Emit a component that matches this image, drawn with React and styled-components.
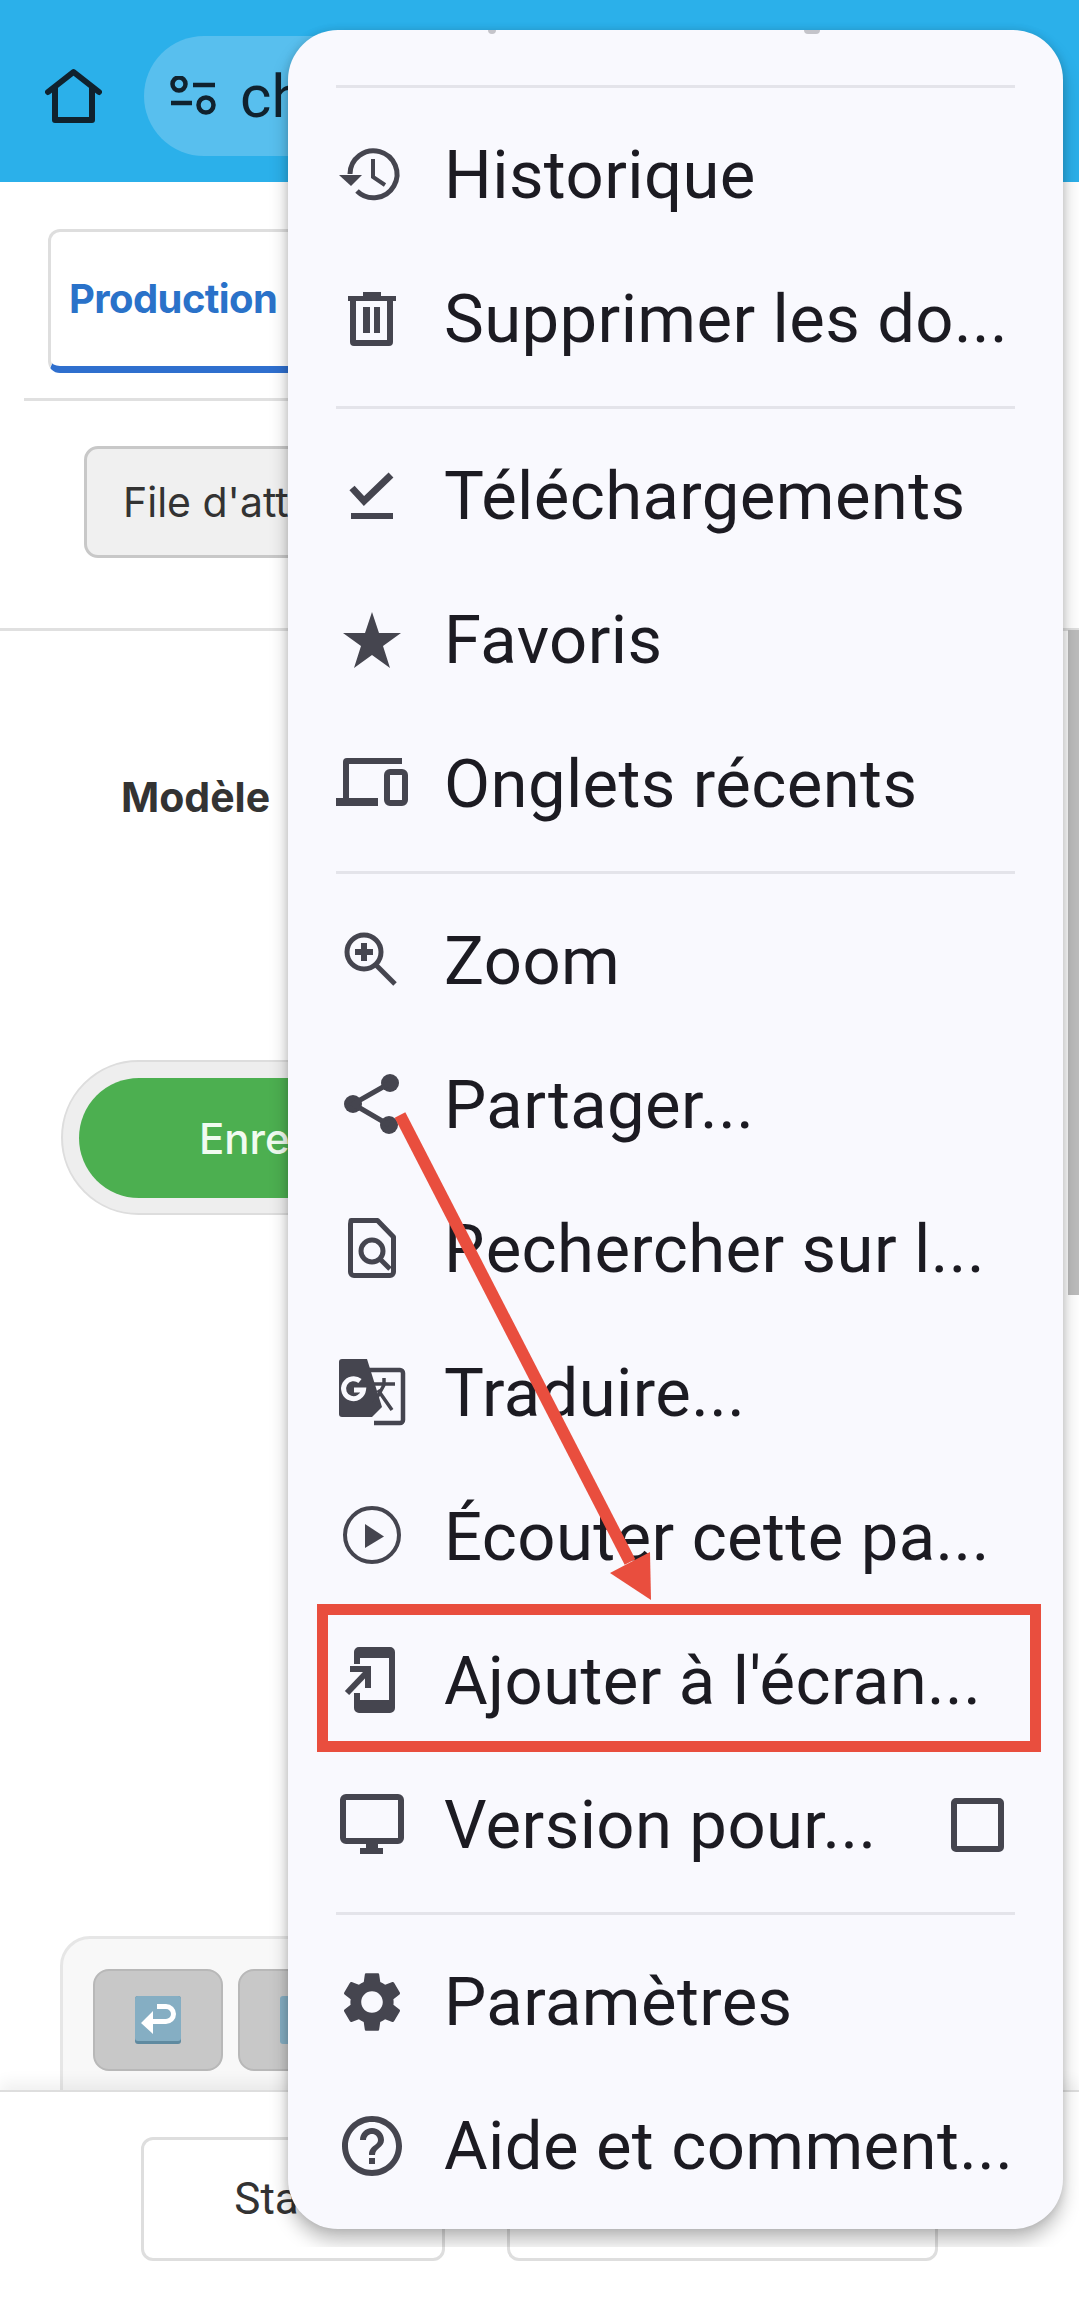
import styled, { createGlobalStyle } from "styled-components";

const GlobalStyle = createGlobalStyle`
  html, body {
    margin: 0;
    padding: 0;
    background: #ffffff;
  }
`;

const Page = styled.div`
  position: relative;
  width: 1079px;
  height: 2307px;
  overflow: hidden;
  background: #ffffff;
  font-family: "Inter", "Liberation Sans", sans-serif;
`;

const TopBar = styled.header`
  display: flex;
  align-items: center;
  gap: 42px;
  height: 182px;
  padding: 10px 0 0 45px;
  box-sizing: border-box;
  background: #2bb0ea;
`;

const UrlPill = styled.div`
  display: flex;
  align-items: center;
  gap: 24px;
  width: 800px;
  height: 120px;
  padding-left: 26px;
  box-sizing: border-box;
  border-radius: 60px;
  background: #58bfee;
  color: #10222e;
  font-size: 60px;
  font-family: "Roboto", sans-serif;
`;

const TabBar = styled.nav`
  display: flex;
  margin: 0 24px;
  padding: 47px 0 25px 24px;
  border-bottom: 3px solid #e0e0e0;
`;

const Tab = styled.div`
  width: 400px;
  height: 144px;
  padding: 42px 0 0 18px;
  box-sizing: border-box;
  border: 3px solid #dedede;
  border-bottom: 7px solid #2f6fce;
  border-radius: 12px;
  color: #2a72c9;
  font-size: 40px;
  font-weight: 700;
  letter-spacing: -0.6px;
`;

const QueueBar = styled.div`
  padding: 45px 0 70px 84px;
  border-bottom: 3px solid #e0e0e0;
`;

const QueueButton = styled.div`
  width: 500px;
  height: 112px;
  padding-left: 36px;
  box-sizing: border-box;
  display: flex;
  align-items: center;
  border: 3px solid #c8c8c8;
  border-radius: 14px;
  background: #f0f0f0;
  color: #333333;
  font-size: 41px;
`;

const FormRow = styled.div`
  padding: 141px 0 0 121px;
  height: 284px;
  box-sizing: border-box;
  color: #333333;
  font-size: 41px;
  font-weight: 700;
`;

const SaveTrack = styled.div`
  width: 900px;
  height: 155px;
  margin: 145px 0 0 61px;
  padding: 16px;
  box-sizing: border-box;
  border: 2px solid #dddddd;
  border-radius: 78px;
  background: #eeeeee;
`;

const SaveButton = styled.div`
  height: 120px;
  padding-left: 120px;
  display: flex;
  align-items: center;
  border-radius: 60px;
  background: #4caf50;
  color: #f0fbf0;
  font-size: 42px;
  font-weight: 500;
`;

const ActionsPanel = styled.section`
  display: grid;
  grid-template-columns: repeat(6, 130px);
  gap: 15px;
  width: 950px;
  height: 300px;
  margin: 721px 0 0 60px;
  padding: 30px;
  box-sizing: border-box;
  border: 3px solid #e6e6e6;
  border-radius: 30px;
  background: #f8f8f8;
`;

const ActionButton = styled.div`
  display: flex;
  align-items: center;
  justify-content: center;
  height: 102px;
  box-sizing: border-box;
  border: 2px solid #b8b8b8;
  border-radius: 16px;
  background: #c8c8c8;
`;

const Footer = styled.footer`
  position: absolute;
  left: 0;
  right: 0;
  bottom: 0;
  height: 217px;
  display: flex;
  gap: 62px;
  padding: 45px 0 0 141px;
  box-sizing: border-box;
  border-top: 2px solid #dedede;
  background: #ffffff;
  box-shadow: 0 -8px 14px rgba(0, 0, 0, 0.06);
`;

const FooterButton = styled.div`
  display: flex;
  align-items: center;
  justify-content: center;
  width: ${(p) => p.$width}px;
  height: 124px;
  box-sizing: border-box;
  border: 3px solid #dedede;
  border-radius: 12px;
  color: #333333;
  font-family: "Roboto", sans-serif;
  font-size: 44px;
`;

const ScrollThumb = styled.div`
  position: absolute;
  top: 630px;
  right: 0;
  width: 11px;
  height: 665px;
  background: #bcbcbc;
`;

const Menu = styled.div`
  position: absolute;
  top: 30px;
  left: 288px;
  width: 775px;
  height: 2199px;
  padding-top: 40px;
  box-sizing: border-box;
  border-radius: 50px;
  background: #f9f9fe;
  box-shadow: 0 12px 18px rgba(0, 0, 0, 0.25), 0 0 8px rgba(0, 0, 0, 0.12);
  clip-path: inset(-30px -30px -18px -30px);
`;

const Speck = styled.span`
  position: absolute;
  top: 0;
  left: ${(p) => p.$left}px;
  width: ${(p) => p.$width}px;
  height: 4px;
  border-radius: 0 0 6px 6px;
  background: #c4c4ca;
`;

const Divider = styled.div`
  height: 3px;
  margin: 15px 48px;
  background: #e4e4ea;
`;

const MenuRow = styled.div`
  display: flex;
  align-items: center;
  height: 144px;
  padding-left: 36px;
  color: #1c1b22;
  font-family: "Roboto", sans-serif;
  font-size: 67px;
  letter-spacing: 0.4px;
  white-space: nowrap;
`;

const IconSlot = styled.span`
  display: flex;
  flex: none;
  width: 96px;
  height: 96px;
  margin-right: 24px;
  color: #45454f;
`;

const CheckBox = styled.span`
  position: absolute;
  right: 59px;
  width: 53px;
  height: 54px;
  box-sizing: border-box;
  border: 6px solid #45454f;
  border-radius: 5px;
`;

const Annotation = styled.svg`
  position: absolute;
  top: 0;
  left: 0;
  pointer-events: none;
`;

// drawn on a 96px grid that matches the icon slot
const Icon = ({ children }) => (
  <svg width="96" height="96" viewBox="0 0 96 96" fill="currentColor" stroke="none">
    {children}
  </svg>
);

const Line = ({ d, w = 5 }) => <path d={d} fill="none" stroke="currentColor" strokeWidth={w} />;

const MaterialIcon = ({ d }) => (
  <svg width="96" height="96" viewBox="-4 -4 32 32" fill="currentColor">
    <path d={d} />
  </svg>
);

const icons = {
  history: (
    <Icon>
      <Line d="M26 47A23.500 23.500 0 1 1 33 64" />
      <path d="M15 48H38L27 59z" />
      <Line d="M49 32V50L61 58" w={4} />
    </Icon>
  ),
  trash: (
    <Icon>
      <path d="M24 25H39V21H57V25H72V30H24z" />
      <path fillRule="evenodd" d="M26 28H69V71a4 4 0 0 1-4 4H30a4 4 0 0 1-4-4zM32 30V69H63V30z" />
      <path d="M39 36H46V62H39zM50 36H56V62H50z" />
    </Icon>
  ),
  done: (
    <Icon>
      <Line d="M28 40 40 53 67 27" w={7} />
      <path d="M27 65H69V71H27z" />
    </Icon>
  ),
  star: (
    <Icon>
      <path d="M48 20 55 41H77L59 54 66 76 48 63 30 76 37 54 19 41H41z" />
    </Icon>
  ),
  devices: (
    <Icon>
      <path d="M23 22H78V28H25V62H54V70H12V62H19V26a4 4 0 0 1 4-4z" />
      <rect x="63" y="36" width="18" height="31" rx="3" fill="none" stroke="currentColor" strokeWidth="6" />
    </Icon>
  ),
  zoom: (
    <Icon>
      <circle cx="40" cy="39" r="17" fill="none" stroke="currentColor" strokeWidth="5" />
      <path d="M37 30H43V36H49V42H43V48H37V42H31V36H37z" />
      <Line d="M51 51 71 71" w={5} />
    </Icon>
  ),
  share: (
    <Icon>
      <circle cx="66" cy="26" r="9" />
      <circle cx="29" cy="47" r="9" />
      <circle cx="65" cy="68" r="9" />
      <Line d="M66 26 29 47 65 68" />
    </Icon>
  ),
  findInPage: (
    <Icon>
      <path d="M27 19.500H53.500L69.500 36V71a3.500 3.500 0 0 1-3.500 3.500H30a3.500 3.500 0 0 1-3.500-3.500V23z" fill="none" stroke="currentColor" strokeWidth="5" strokeLinejoin="round" />
      <circle cx="48" cy="50" r="11" fill="none" stroke="currentColor" strokeWidth="5" />
      <Line d="M56 58 66 68" />
    </Icon>
  ),
  translate: (
    <Icon>
      <path d="M18 14H43L58 62 48 72H18a3 3 0 0 1-3-3V17a3 3 0 0 1 3-3z" />
      <path d="M44 25H76a3 3 0 0 1 3 3V75a3 3 0 0 1-3 3H50" fill="none" stroke="currentColor" strokeWidth="4.500" />
      <path d="M36 36A10 10 0 1 0 39.500 45H30" fill="none" stroke="#f9f9fe" strokeWidth="5" />
      <Line d="M50 39H71M60 33V39M54 45 68 65M60 40 50 58" w={3.500} />
    </Icon>
  ),
  play: (
    <Icon>
      <circle cx="48" cy="46" r="27" fill="none" stroke="currentColor" strokeWidth="4" />
      <path d="M41 35 60 47.500 41 59z" />
    </Icon>
  ),
  addHome: (
    <Icon>
      <path d="M35 14H66a5 5 0 0 1 5 5V75a5 5 0 0 1-5 5H35a5 5 0 0 1-5-5V60H36V67H65V25H36V31H30V19a5 5 0 0 1 5-5z" />
      <Line d="M23 60 44 38" w={6} />
      <path d="M26 33H47V55H41V39H26z" />
    </Icon>
  ),
  desktop: (
    <Icon>
      <rect x="19" y="20" width="58" height="44" rx="3" fill="none" stroke="currentColor" strokeWidth="6" />
      <path d="M42 66H54V71H59V77H36V71H42z" />
    </Icon>
  ),
  settings: (
    <MaterialIcon d="M19.140 12.940c.04-.3.06-.61.06-.94 0-.32-.02-.64-.07-.94l2.030-1.580c.18-.14.23-.41.12-.61l-1.920-3.320c-.12-.22-.37-.29-.59-.22l-2.390.96c-.5-.38-1.030-.7-1.620-.94l-.36-2.540c-.04-.24-.24-.41-.48-.41h-3.840c-.24 0-.43.17-.47.41l-.36 2.540c-.59.24-1.130.57-1.620.94l-2.390-.96c-.22-.08-.47 0-.59.22L2.740 8.870c-.12.21-.08.47.12.61l2.030 1.580c-.05.3-.09.63-.09.94s.02.64.07.94l-2.030 1.580c-.18.14-.23.41-.12.61l1.920 3.320c.12.22.37.29.59.22l2.390-.96c.5.38 1.030.7 1.620.94l.36 2.540c.05.24.24.41.48.41h3.840c.24 0 .44-.17.47-.41l.36-2.540c.59-.24 1.130-.56 1.620-.94l2.390.96c.22.08.47 0 .59-.22l1.920-3.320c.12-.22.07-.47-.12-.61l-2.010-1.580zM12 15.600c-1.980 0-3.600-1.620-3.600-3.600s1.620-3.600 3.600-3.600 3.600 1.620 3.600 3.600-1.620 3.600-3.600 3.600z" />
  ),
  help: (
    <MaterialIcon d="M11 18h2v-2h-2v2zm1-16C6.480 2 2 6.480 2 12s4.480 10 10 10 10-4.480 10-10S17.520 2 12 2zm0 18c-4.410 0-8-3.590-8-8s3.590-8 8-8 8 3.590 8 8-3.590 8-8 8zm0-14c-2.210 0-4 1.790-4 4h2c0-1.100.9-2 2-2s2 .9 2 2c0 2-3 1.750-3 5h2c0-2.250 3-2.500 3-5 0-2.210-1.790-4-4-4z" />
  ),
};

const sections = [
  [
    ["history", "Historique"],
    ["trash", "Supprimer les do..."],
  ],
  [
    ["done", "Téléchargements"],
    ["star", "Favoris"],
    ["devices", "Onglets récents"],
  ],
  [
    ["zoom", "Zoom"],
    ["share", "Partager..."],
    ["findInPage", "Rechercher sur l..."],
    ["translate", "Traduire..."],
    ["play", "Écouter cette pa..."],
    ["addHome", "Ajouter à l'écran..."],
    ["desktop", "Version pour...", true],
  ],
  [
    ["settings", "Paramètres"],
    ["help", "Aide et comment..."],
  ],
];

function App() {
  return (
    <Page>
      <GlobalStyle />
      <TopBar>
        <svg width="57" height="56" viewBox="0 0 57 56" fill="none" stroke="#10222e" strokeWidth="6" strokeLinejoin="round" strokeLinecap="round">
          <path d="M3 24 28.500 4 54 24" />
          <path d="M10 20v32h37V20" />
        </svg>
        <UrlPill>
          <svg width="46" height="40" viewBox="0 0 46 40" fill="none" stroke="#10222e" strokeWidth="4.500">
            <circle cx="9" cy="8" r="6.500" />
            <path d="M23 9h22M1 27h21" />
            <circle cx="36" cy="29" r="7.500" />
          </svg>
          chrome
        </UrlPill>
      </TopBar>
      <TabBar>
        <Tab>Production</Tab>
      </TabBar>
      <QueueBar>
        <QueueButton>File d'attente</QueueButton>
      </QueueBar>
      <FormRow>Modèle</FormRow>
      <SaveTrack>
        <SaveButton>Enregistrer</SaveButton>
      </SaveTrack>
      <ActionsPanel>
        <ActionButton>
          <svg width="46" height="48" viewBox="0 0 46 48">
            <rect width="46" height="48" rx="3" fill="#5f8aa0" />
            <rect width="46" height="45" rx="3" fill="#85aec3" />
            <path d="M6 27 18 15v8h13a5 5 0 0 0 0-10H22V8h9a10 10 0 0 1 0 20H18v10z" fill="#ffffff" />
          </svg>
        </ActionButton>
        <ActionButton>
          <svg width="46" height="48" viewBox="0 0 46 48">
            <rect width="46" height="48" rx="3" fill="#85aec3" />
          </svg>
        </ActionButton>
        {[0, 1, 2, 3, 4, 5, 6, 7].map((n) => (
          <ActionButton key={n} />
        ))}
      </ActionsPanel>
      <ScrollThumb />
      <Footer>
        <FooterButton $width={304}>Statut</FooterButton>
        <FooterButton $width={431} />
      </Footer>
      <Menu>
        <Speck $left={200} $width={8} />
        <Speck $left={516} $width={16} />
        <Divider />
        {sections.map((rows, i) => (
          <div key={i}>
            {rows.map(([icon, label, check]) => (
              <MenuRow key={label}>
                <IconSlot>{icons[icon]}</IconSlot>
                {label}
                {check && <CheckBox />}
              </MenuRow>
            ))}
            {i < sections.length - 1 && <Divider />}
          </div>
        ))}
      </Menu>
      <Annotation width="1079" height="2307">
        <path d="M400 1115 630 1562" stroke="#e94e3e" strokeWidth="12" fill="none" />
        <path d="M610 1573 650 1552 651 1600z" fill="#e94e3e" />
        <rect x="322.500" y="1609.500" width="713" height="137" fill="none" stroke="#e94e3e" strokeWidth="11" />
      </Annotation>
    </Page>
  );
}

export default App;
